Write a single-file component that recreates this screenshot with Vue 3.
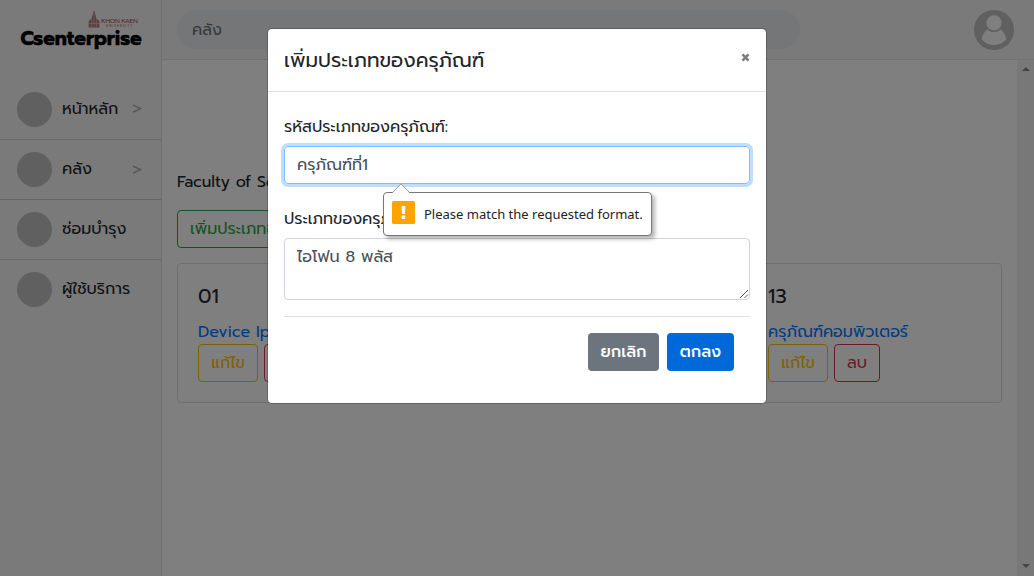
<script setup>
const menu = [
  { label: 'หน้าหลัก', more: true },
  { label: 'คลัง', more: true },
  { label: 'ซ่อมบำรุง', more: false },
  { label: 'ผู้ใช้บริการ', more: false },
]
const devices = [
  { id: '01', name: 'Device Iphone' },
  { id: '13', name: 'ครุภัณฑ์คอมพิวเตอร์' },
]
</script>

<template>
  <div class="app">
    <aside class="sidebar">
      <div class="logo">
        <div class="uni">
          <svg width="12" height="20" viewBox="0 0 12 20">
            <path d="M6 1 7.200 5 8.400 9.500 11.300 12V18.500H.7V12L3.600 9.500 4.800 5Z" fill="#a0504e" opacity=".75" />
            <path d="M6 4V18M3.600 10V18M8.400 10V18M1 14.500H11" stroke="#ecd9d8" stroke-width=".6" />
          </svg>
          <div class="uni-text">
            <span class="uni-name">KHON KAEN</span>
            <span class="uni-sub">UNIVERSITY</span>
          </div>
        </div>
        <span class="brand">Csenterprise</span>
      </div>
      <nav>
        <a v-for="m in menu" :key="m.label" class="item">
          <i class="dot"></i>
          <span class="label">{{ m.label }}</span>
          <svg v-if="m.more" class="chev" width="10" height="10" viewBox="0 0 10 10">
            <path d="M1 1.200 8.600 4.700 1 8.200" fill="none" stroke="#aaa" stroke-width="1.400" />
          </svg>
        </a>
      </nav>
    </aside>

    <section class="page">
      <header class="topbar">
        <div class="search"><span>คลัง</span></div>
        <svg class="avatar" width="40" height="40" viewBox="0 0 40 40">
          <circle cx="20" cy="20" r="20" fill="#c0c0c0" />
          <path d="M13.200 19.400C9.500 23 7.900 26 7.700 29.200C10.500 32.600 15 35 20 35S29.500 32.600 32.300 29.200C32.100 26 30.500 23 26.800 19.400C25 21 23 22 20 22S15 21 13.200 19.400Z" fill="#fff" />
          <circle cx="20" cy="12.800" r="8.200" fill="#fff" stroke="#c0c0c0" stroke-width="1.200" />
        </svg>
      </header>
      <div class="body">
        <main class="content">
          <p class="faculty">Faculty of Science</p>
          <button class="btn add"><span>เพิ่มประเภทของครุภัณฑ์</span></button>
          <div class="card">
            <div v-for="d in devices" :key="d.id" class="device">
              <h5>{{ d.id }}</h5>
              <a class="name">{{ d.name }}</a>
              <div class="actions">
                <button class="btn edit">แก้ไข</button>
                <button class="btn del">ลบ</button>
              </div>
            </div>
          </div>
        </main>
        <div class="scrollbar">
          <i class="up"></i>
          <i class="down"></i>
        </div>
      </div>
    </section>

    <div class="backdrop">
      <div class="modal">
        <div class="modal-head">
          <h5>เพิ่มประเภทของครุภัณฑ์</h5>
          <svg class="close" width="9" height="9" viewBox="0 0 9 9">
            <path d="M1.500 1.300 7.500 7.700M7.500 1.300 1.500 7.700" stroke="#7f7f7f" stroke-width="2.700" />
          </svg>
        </div>
        <div class="modal-body">
          <label>รหัสประเภทของครุภัณฑ์:</label>
          <div class="field focus">
            <span>ครุภัณฑ์ที่1</span>
            <div class="tip">
              <svg class="arrow" width="18" height="10" viewBox="0 0 18 10">
                <path d="M1 9.500 9 1 17 9.500V10H1Z" fill="#fff" />
                <path d="M.5 9.500 9 .8 17.500 9.500" fill="none" stroke="#999" />
              </svg>
              <svg class="warn" width="23" height="23" viewBox="0 0 23 23">
                <rect width="23" height="23" rx="1.500" fill="#ffa300" />
                <path d="M9.600 5H13.400L13 13H10Z" fill="#fff" />
                <rect x="9.700" y="14.600" width="3.600" height="3.400" rx=".8" fill="#fff" />
              </svg>
              <span class="tip-text">Please match the requested format.</span>
            </div>
          </div>
          <label class="second">ประเภทของครุภัณฑ์:</label>
          <div class="field area">
            <span>ไอโฟน 8 พลัส</span>
            <svg class="grip" width="10" height="10" viewBox="0 0 10 10">
              <path d="M1 9 9 1M5.500 9 9 5.500" stroke="#555" stroke-width="1" />
            </svg>
          </div>
          <div class="modal-foot">
            <button class="btn cancel">ยกเลิก</button>
            <button class="btn ok">ตกลง</button>
          </div>
        </div>
      </div>
    </div>
  </div>
</template>

<style>
body { margin: 0; overflow: hidden; }
</style>

<style scoped>
* { box-sizing: border-box; }
.app {
  position: relative; display: flex; width: 1034px; height: 576px; overflow: hidden;
  font-family: Prompt, Kanit, "Noto Sans Thai", "Noto Sans", "DejaVu Sans", sans-serif;
  font-size: 16px; line-height: 24px; color: #212529; background: #fff; white-space: nowrap;
}
h5, p { margin: 0; font-weight: 400; }
.sidebar { width: 162px; flex: none; background: #f4f4f4; border-right: 1px solid #e0e0e0; }
.logo { height: 79px; padding: 9px 0 0 20px; }
.uni { display: flex; gap: 1px; height: 19px; margin-left: 68px; }
.uni-text { display: flex; flex-direction: column; padding-top: 8px; color: #a0504e; }
.uni-name { font: 500 6.500px/7px Lato, sans-serif; letter-spacing: -.2px; }
.uni-sub { font: 3px/4px Lato, sans-serif; letter-spacing: 1px; padding-left: 5px; }
.brand { display: block; font-weight: 700; font-size: 19.500px; line-height: 21px; color: #000; letter-spacing: -.05px; -webkit-text-stroke: .4px #000; padding-left: .5px; }
.item { display: flex; align-items: center; height: 60px; padding: 0 19px 0 17px; border-bottom: 1px solid #ccc; }
.item:nth-child(1) { height: 61px; }
.item:last-child { border-color: transparent; }
.dot { width: 35px; height: 35px; border-radius: 50%; background: #c0c0c0; margin-right: 10px; }
.label { flex: 1; margin-top: -1px; }
.page { flex: 1; display: flex; flex-direction: column; }
.topbar { display: flex; justify-content: space-between; align-items: center; height: 60px; padding: 0 20px 0 15px; background: #f4f4f4; border-bottom: 1px solid #e0e0e0; }
.search { width: 623px; height: 39px; border-radius: 20px; background: #e9ecef; padding: 8px 15px; color: #6c757d; }
.body { flex: 1; display: flex; }
.content { flex: 1; padding: 110px 15px 0; }
.scrollbar { width: 17px; background: #f1f1f1; display: flex; flex-direction: column; justify-content: space-between; align-items: center; padding: 7px 0 8px; }
.up, .down { border: 4px solid transparent; }
.up { border-top: 0; border-bottom-color: #888; }
.down { border-bottom: 0; border-top-color: #888; }
.btn { font: inherit; height: 38px; border: 1px solid; border-radius: 4px; background: transparent; padding: 0; text-align: center; }
.add { display: block; width: 220px; margin-top: 16px; padding-left: 12px; text-align: left; color: #28a745; }
.card { display: grid; grid-template-columns: 570px 1fr; height: 140px; margin-top: 15px; padding: 20px; border: 1px solid #dfdfdf; border-radius: 4px; }
.device h5 { font-size: 20px; line-height: 24px; margin-bottom: 12px; }
.name { display: block; height: 24px; color: #007bff; }
.actions { display: flex; gap: 6px; }
.edit { width: 60px; color: #ffc107; }
.del { width: 46px; color: #dc3545; }
.backdrop { position: absolute; inset: 0; background: rgba(0, 0, 0, .5); padding: 28px 0 0 267px; }
.modal { width: 500px; height: 376px; border: 1px solid rgba(0, 0, 0, .2); border-radius: 5px; background: #fff; background-clip: padding-box; }
.modal-head { display: flex; justify-content: space-between; height: 63px; padding: 16px; border-bottom: 1px solid #dee2e6; }
.modal-head h5 { font-size: 20px; line-height: 30px; }
.close { margin-top: 8px; }
.modal-body { padding: 23px 16px 0; }
label { display: block; height: 31px; }
.field { position: relative; height: 38px; padding: 6px 12px; border: 1px solid #ced4da; border-radius: 4px; color: #495057; }
.focus { border-color: #80bdff; box-shadow: 0 0 0 3px #bfdeff; z-index: 1; }
.second { margin-top: 23px; }
.area { height: 62px; }
.grip { position: absolute; right: 0; bottom: 0; }
.tip { position: absolute; left: 98px; top: 45px; width: 269px; height: 44px; display: flex; align-items: center; gap: 9px; padding: 0 8px; background: #fff; border: 1px solid #777; border-radius: 4px; box-shadow: 3px 3px 4px rgba(0, 0, 0, .3); color: #222; }
.arrow { position: absolute; left: 8px; top: -10px; }
.warn { flex: none; margin-bottom: 4px; }
.tip-text { font: 13px/20px "Noto Sans", sans-serif; }
.modal-foot { display: flex; justify-content: flex-end; gap: 8px; margin-top: 16px; padding: 16px 16px 0; border-top: 1px solid #dee2e6; }
.modal-foot .btn { border: 0; color: #fff; font-weight: 500; }
.cancel { width: 71px; background: #6c757d; }
.ok { width: 67px; background: #0069d9; }
</style>
